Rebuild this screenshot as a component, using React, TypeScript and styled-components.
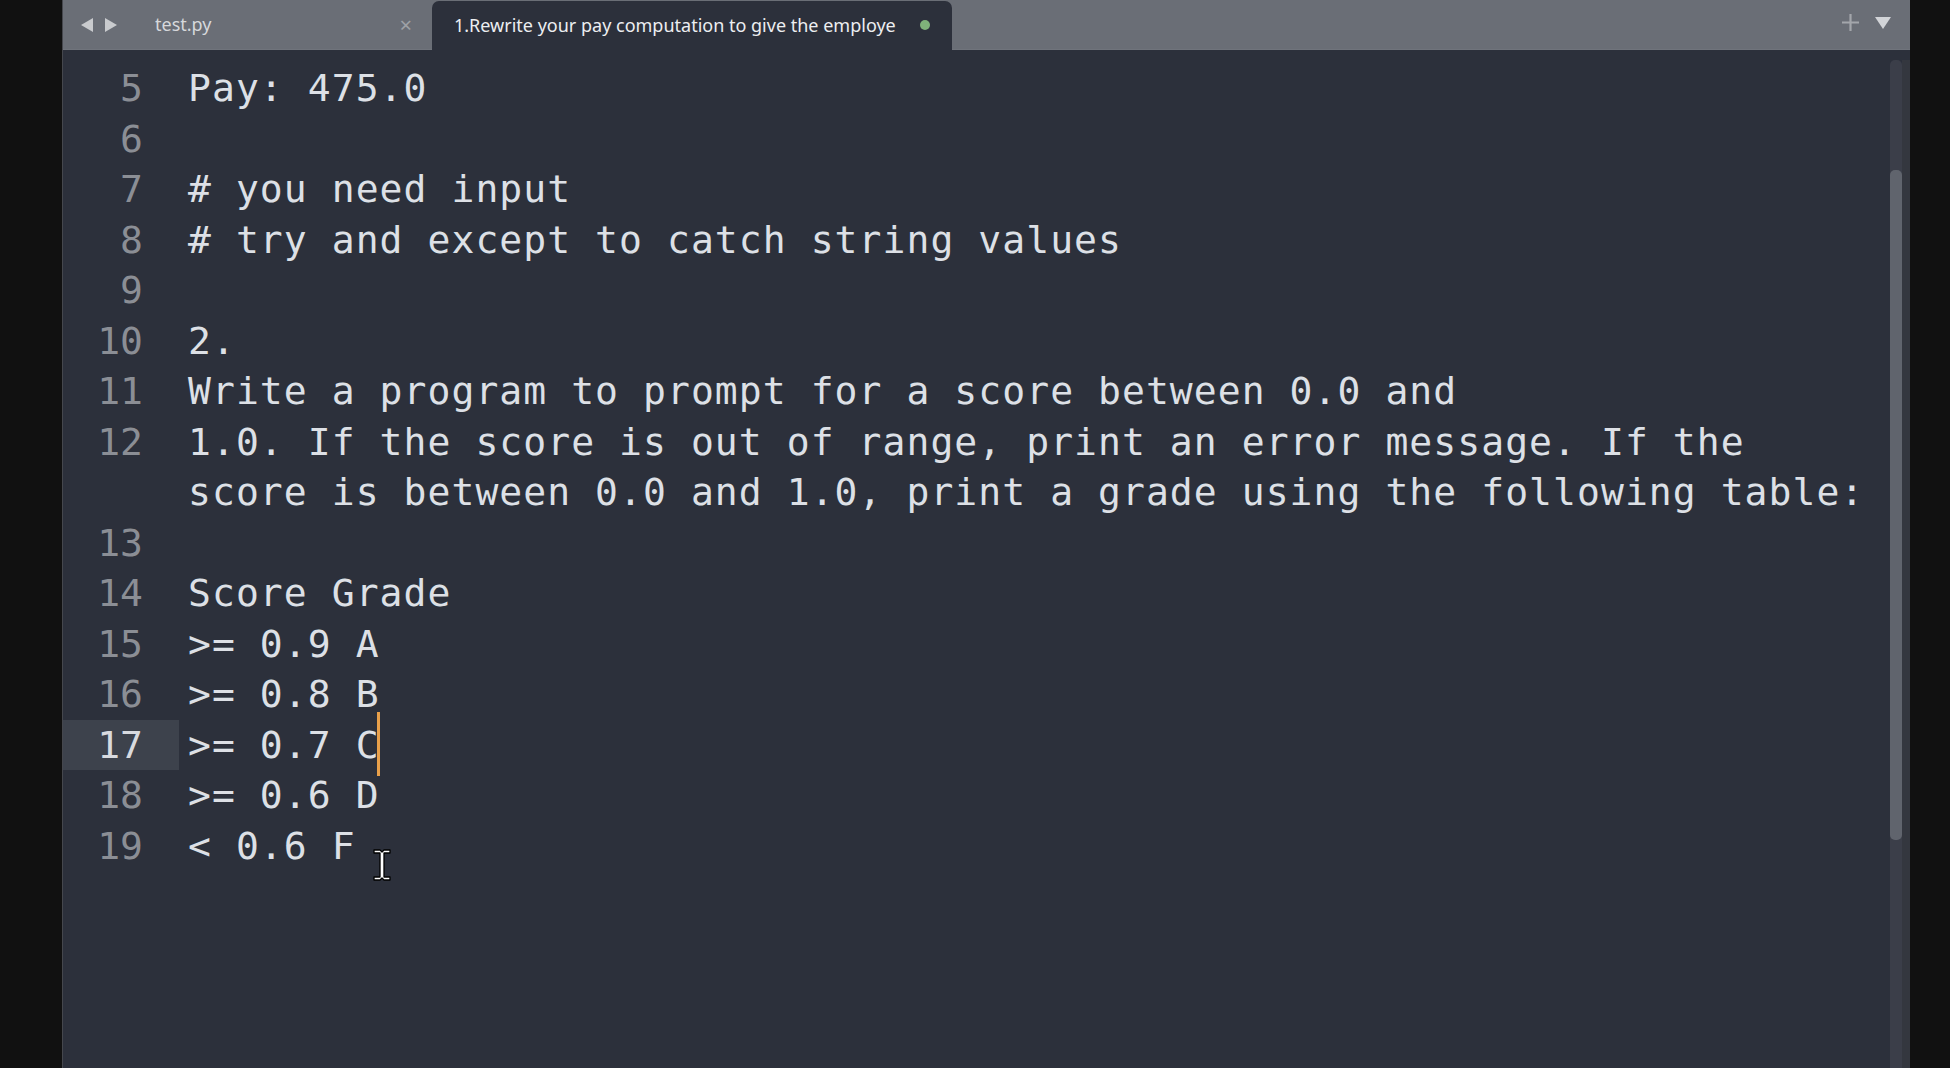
import React from 'react'
import styled, { createGlobalStyle } from 'styled-components'

const GlobalStyle = createGlobalStyle`
  html, body {
    margin: 0;
    padding: 0;
    background: #111111;
    overflow: hidden;
  }
  #root {
    height: 100vh;
  }
`

interface Line {
    num?: number
    text: string
    caret?: number
}

const lines: Line[] = [
    { num: 5, text: 'Pay: 475.0' },
    { num: 6, text: '' },
    { num: 7, text: '# you need input' },
    { num: 8, text: '# try and except to catch string values' },
    { num: 9, text: '' },
    { num: 10, text: '2.' },
    { num: 11, text: 'Write a program to prompt for a score between 0.0 and' },
    { num: 12, text: '1.0. If the score is out of range, print an error message. If the' },
    { text: 'score is between 0.0 and 1.0, print a grade using the following table:' },
    { num: 13, text: '' },
    { num: 14, text: 'Score Grade' },
    { num: 15, text: '>= 0.9 A' },
    { num: 16, text: '>= 0.8 B' },
    { num: 17, text: '>= 0.7 C', caret: 8 },
    { num: 18, text: '>= 0.6 D' },
    { num: 19, text: '< 0.6 F' },
]

const Screen = styled.div`
    display: flex;
    height: 100%;
    background: #111111;
    padding-left: 62px;
`

const Window = styled.div`
    width: 1848px;
    display: flex;
    flex-direction: column;
    background: #2c303b;
    border-left: 1px solid #45474d;
    box-sizing: border-box;
`

const TabBar = styled.div`
    height: 50px;
    flex: none;
    display: flex;
    align-items: flex-end;
    background: #6a6e76;
    border-bottom: 1px solid #70747c;
    box-sizing: border-box;
    font-family: "Noto Sans", "Open Sans", sans-serif;
`

const Nav = styled.div`
    display: flex;
    align-items: center;
    gap: 10px;
    height: 100%;
    padding-left: 17px;
    padding-right: 18px;
`

const Tab = styled.div<{ $active?: boolean }>`
    display: flex;
    align-items: center;
    box-sizing: border-box;
    padding: 0 ${p => (p.$active ? '22px' : '20px')} 2px ${p => (p.$active ? '22px' : '19px')};
    width: ${p => (p.$active ? '520px' : '296px')};
    background: ${p => (p.$active ? '#2c303b' : 'transparent')};
    border-radius: 7px 7px 0 0;
    margin-bottom: ${p => (p.$active ? '-1px' : '0')};
    height: ${p => (p.$active ? '49px' : '48px')};
`

const TabTitle = styled.span<{ $active?: boolean }>`
    flex: 1;
    font-size: 18px;
    white-space: nowrap;
    overflow: hidden;
    color: ${p => (p.$active ? '#eceef1' : '#d6d8db')};
`

const Close = styled.span`
    color: #9ea1a6;
    font-size: 22px;
    line-height: 1;
`

const Dot = styled.span`
    width: 10px;
    height: 10px;
    border-radius: 50%;
    background: #7fb27a;
    margin-left: 10px;
`

const Spacer = styled.div`
    flex: 1;
`

const Controls = styled.div`
    display: flex;
    align-items: center;
    gap: 14px;
    height: 100%;
    padding-right: 18px;
    padding-bottom: 4px;
    box-sizing: border-box;
`

const Body = styled.div`
    flex: 1;
    display: flex;
    min-height: 0;
`

const Code = styled.div`
    flex: 1;
    padding-top: 13px;
    font-family: "DejaVu Sans Mono", "Liberation Mono", monospace;
    font-size: 38px;
    letter-spacing: 1.07px;
    line-height: 50.5px;
`

const Row = styled.div`
    display: flex;
    height: 50.5px;
`

const Gutter = styled.div<{ $current?: boolean }>`
    width: 116px;
    flex: none;
    box-sizing: border-box;
    padding-right: 36px;
    text-align: right;
    color: ${p => (p.$current ? '#d8dadf' : '#8b8e95')};
    background: ${p => (p.$current ? '#3d424c' : 'transparent')};
    letter-spacing: 0;
`

const Text = styled.div`
    position: relative;
    padding-left: 9px;
    color: #dde0e6;
    white-space: pre;
`

const Caret = styled.span`
    position: absolute;
    top: -8px;
    width: 3px;
    height: 64px;
    margin-left: -3px;
    background: #e9a04a;
`

const Pointer = styled.svg`
    position: absolute;
    left: 372px;
    top: 848px;
`

const ScrollColumn = styled.div`
    width: 20px;
    flex: none;
    display: flex;
    padding-top: 10px;
    box-sizing: border-box;
`

const Track = styled.div`
    width: 12px;
    background: #3b3e49;
    border-radius: 5px 5px 0 0;
    display: flex;
    flex-direction: column;
`

const Thumb = styled.div`
    margin-top: 110px;
    height: 670px;
    background: #60646d;
    border-radius: 5px;
`

const Edge = styled.div`
    width: 8px;
    background: #34373f;
`

const Arrow = ({ dir }: { dir: 'left' | 'right' }) => (
    <svg width="14" height="16" viewBox="0 0 14 16">
        <path d={dir === 'left' ? 'M13 1 L1 8 L13 15 Z' : 'M1 1 L13 8 L1 15 Z'} fill="#c9cbce" />
    </svg>
)

const App = () => {
    return (
        <>
            <GlobalStyle />
            <Screen>
                <Window>
                    <TabBar>
                        <Nav>
                            <Arrow dir="left" />
                            <Arrow dir="right" />
                        </Nav>
                        <Tab>
                            <TabTitle>test.py</TabTitle>
                            <Close>×</Close>
                        </Tab>
                        <Tab $active>
                            <TabTitle $active>1.Rewrite your pay computation to give the employe</TabTitle>
                            <Dot />
                        </Tab>
                        <Spacer />
                        <Controls>
                            <svg width="19" height="19" viewBox="0 0 19 19">
                                <path d="M9.5 1 V18 M1 9.5 H18" stroke="#a3a6ab" strokeWidth="2.2" />
                            </svg>
                            <svg width="18" height="14" viewBox="0 0 18 14">
                                <path d="M1 1 H17 L9 13 Z" fill="#d2d4d8" />
                            </svg>
                        </Controls>
                    </TabBar>
                    <Body>
                        <Code>
                            {lines.map((l, i) => (
                                <Row key={i}>
                                    <Gutter $current={l.caret !== undefined}>{l.num ?? ''}</Gutter>
                                    <Text>
                                        {l.caret !== undefined ? (
                                            <>
                                                {l.text.slice(0, l.caret)}
                                                <Caret />
                                                {l.text.slice(l.caret)}
                                            </>
                                        ) : (
                                            l.text
                                        )}
                                    </Text>
                                </Row>
                            ))}
                        </Code>
                        <ScrollColumn>
                            <Track>
                                <Thumb />
                            </Track>
                            <Edge />
                        </ScrollColumn>
                    </Body>
                </Window>
            </Screen>
            <Pointer width="20" height="34" viewBox="0 0 20 34">
                <path
                    d="M2 2 H8 L10 4 L12 2 H18 V5 H12 V29 H18 V32 H12 L10 30 L8 32 H2 V29 H8 V5 H2 Z"
                    fill="#ffffff"
                    stroke="#000000"
                    strokeWidth="1.3"
                    strokeLinejoin="round"
                />
            </Pointer>
        </>
    )
}

export default App
